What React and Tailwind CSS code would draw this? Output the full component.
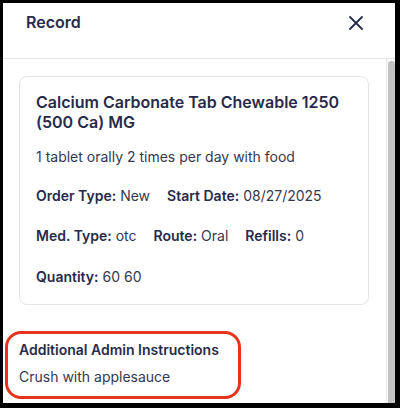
export default function App() {
  return (
    <div className="relative w-[400px] h-[408px] bg-black pt-[3px] pl-[3px] pr-[5px] pb-[5px] font-['Inter',sans-serif] overflow-hidden">
      <div className="h-full bg-white flex flex-col">
        <div className="h-[56px] shrink-0 border-b border-[#e4e6ea] flex items-start justify-between pl-[23px] pr-[32px] pt-[7px]">
          <div className="text-base leading-6 font-semibold text-[#272b4b]">Record</div>
          <div className="h-[26px] flex items-center">
            <svg width="14" height="14" viewBox="0 0 14 14" fill="none" stroke="#272b4b" strokeWidth="1.8" strokeLinecap="round">
              <path d="M1 1L13 13M13 1L1 13" />
            </svg>
          </div>
        </div>
        <div className="flex-1 flex min-h-0">
          <div className="flex-1 pl-4 pr-[17px] pt-[17px]">
            <div className="border border-[#e3e5ea] rounded-lg px-4 pt-[15px] pb-[17px]">
              <div className="text-base leading-5 font-semibold text-[#272b4b]">
                Calcium Carbonate Tab Chewable 1250 (500 Ca) MG
              </div>
              <div className="mt-[15px] text-sm leading-5 text-[#34384f]">
                1 tablet orally 2 times per day with food
              </div>
              <div className="mt-[19px] flex gap-x-[17px] text-sm leading-5 text-[#34384f]">
                <div><span className="font-semibold text-[#272b4b]">Order Type:</span> New</div>
                <div><span className="font-semibold text-[#272b4b]">Start Date:</span> 08/27/2025</div>
              </div>
              <div className="mt-5 flex gap-x-[17px] text-sm leading-5 text-[#34384f]">
                <div><span className="font-semibold text-[#272b4b]">Med. Type:</span> otc</div>
                <div><span className="font-semibold text-[#272b4b]">Route:</span> Oral</div>
                <div><span className="font-semibold text-[#272b4b]">Refills:</span> 0</div>
              </div>
              <div className="mt-[21px] flex gap-x-[17px] text-sm leading-5 text-[#34384f]">
                <div><span className="font-semibold text-[#272b4b]">Quantity:</span> 60 60</div>
              </div>
            </div>
            <div className="mt-[35px] text-sm leading-5 font-semibold text-[#272b4b]">
              Additional Admin Instructions
            </div>
            <div className="mt-[7px] text-sm leading-5 text-[#34384f]">Crush with applesauce</div>
          </div>
          <div className="w-[9px] shrink-0 border-l border-[#ebebeb] bg-[#f8f8f8] pl-[1px] pt-[2px] flex">
            <div className="flex-1 rounded-t-[4px] bg-[#c2c2c2]"></div>
          </div>
        </div>
      </div>
      <div className="absolute left-[5px] top-[331px] w-[236px] h-[68px] border-[3px] border-[#e6341c] rounded-[16px]"></div>
    </div>
  );
}
